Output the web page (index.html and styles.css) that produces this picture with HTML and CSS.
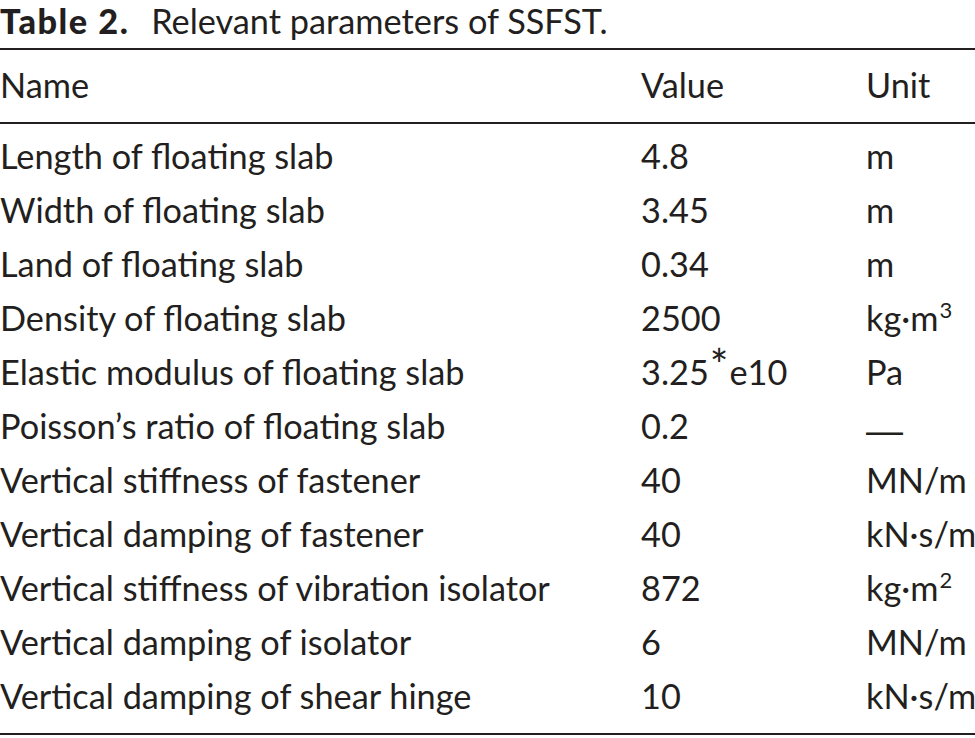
FILE: index.html
```html
<!DOCTYPE html>
<html lang="en">
<head>
<meta charset="utf-8">
<title>Table 2. Relevant parameters of SSFST.</title>
<link rel="stylesheet" href="styles.css">
</head>
<body>
<div class="table-wrap">
  <div class="caption"><span class="label">Table 2.</span> Relevant parameters of SSFST.</div>
  <div class="head row">
    <div class="c-name">Name</div>
    <div class="c-val">Value</div>
    <div class="c-unit">Unit</div>
  </div>
  <div class="body">
    <div class="row"><div class="c-name">Length of floating slab</div><div class="c-val">4.8</div><div class="c-unit">m</div></div>
    <div class="row"><div class="c-name">Width of floating slab</div><div class="c-val">3.45</div><div class="c-unit">m</div></div>
    <div class="row"><div class="c-name">Land of floating slab</div><div class="c-val">0.34</div><div class="c-unit">m</div></div>
    <div class="row"><div class="c-name">Density of floating slab</div><div class="c-val">2500</div><div class="c-unit">kg·m<sup>3</sup></div></div>
    <div class="row"><div class="c-name">Elastic modulus of floating slab</div><div class="c-val">3.25<sup class="ast">*</sup>e10</div><div class="c-unit">Pa</div></div>
    <div class="row"><div class="c-name">Poisson’s ratio of floating slab</div><div class="c-val">0.2</div><div class="c-unit"><span class="dash">—</span></div></div>
    <div class="row"><div class="c-name">Vertical stiffness of fastener</div><div class="c-val">40</div><div class="c-unit">MN/m</div></div>
    <div class="row"><div class="c-name">Vertical damping of fastener</div><div class="c-val">40</div><div class="c-unit">kN·s/m</div></div>
    <div class="row"><div class="c-name">Vertical stiffness of vibration isolator</div><div class="c-val">872</div><div class="c-unit">kg·m<sup>2</sup></div></div>
    <div class="row"><div class="c-name">Vertical damping of isolator</div><div class="c-val">6</div><div class="c-unit">MN/m</div></div>
    <div class="row"><div class="c-name">Vertical damping of shear hinge</div><div class="c-val">10</div><div class="c-unit">kN·s/m</div></div>
  </div>
</div>
</body>
</html>
```
FILE: styles.css
```css
html, body {
  margin: 0;
  padding: 0;
  background: #ffffff;
}
body {
  font-family: "Lato", "Open Sans", sans-serif;
  color: #231f20;
  width: 975px;
  height: 738px;
  overflow: hidden;
}
.table-wrap {
  display: flex;
  flex-direction: column;
}
.caption {
  font-size: 34.3px;
  line-height: 42px;
  height: 42px;
  padding-bottom: 6px;
  white-space: nowrap;
}
.caption .label {
  font-weight: 900;
  letter-spacing: 1.5px;
  margin-right: 13px;
}
.row {
  display: grid;
  grid-template-columns: 641px 225px 1fr;
  font-size: 34.3px;
  line-height: 54px;
  height: 54px;
  white-space: nowrap;
}
.head {
  border-top: 2px solid #231f20;
  border-bottom: 2px solid #231f20;
  height: 64px;
  padding-top: 8px;
}
.body {
  padding-top: 5px;
  padding-bottom: 10px;
  border-bottom: 2px solid #231f20;
}
sup {
  font-size: 22px;
  line-height: 0;
  vertical-align: 13px;
  margin-left: 1px;
}
sup.ast {
  font-size: 44px;
  vertical-align: 4px;
  margin: 0 1px 0 1px;
}
.dash {
  font-family: "Liberation Sans", sans-serif;
  font-size: 37px;
  display: inline-block;
  vertical-align: -4px;
}
```
